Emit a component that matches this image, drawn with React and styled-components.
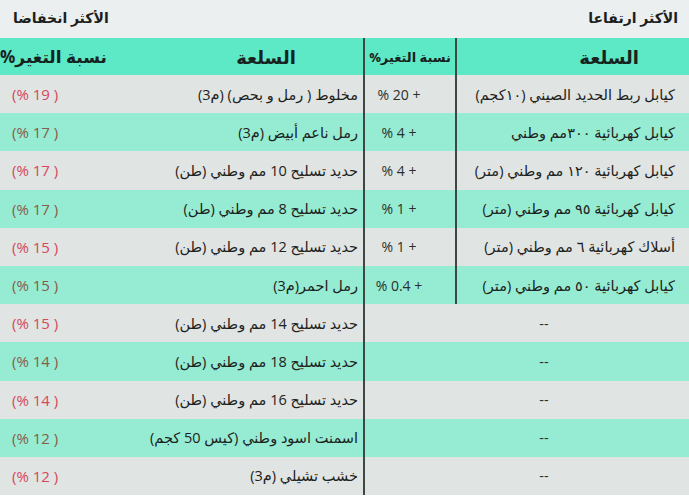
import styled, { createGlobalStyle } from "styled-components";

const GlobalStyle = createGlobalStyle`
  html, body {
    margin: 0;
    padding: 0;
    background: #ffffff;
  }
  body {
    font-family: "Open Sans", "DejaVu Sans", sans-serif;
  }
`;

const drops = [
  { name: "مخلوط ( رمل و بحص) (م3)", pct: "(% 19 )" },
  { name: "رمل ناعم أبيض (م3)", pct: "(% 17 )" },
  { name: "حديد تسليح 10 مم وطني (طن)", pct: "(% 17 )" },
  { name: "حديد تسليح 8 مم وطني (طن)", pct: "(% 17 )" },
  { name: "حديد تسليح 12 مم وطني (طن)", pct: "(% 15 )" },
  { name: "رمل احمر(م3)", pct: "(% 15 )" },
  { name: "حديد تسليح 14 مم وطني (طن)", pct: "(% 15 )" },
  { name: "حديد تسليح 18 مم وطني (طن)", pct: "(% 14 )" },
  { name: "حديد تسليح 16 مم وطني (طن)", pct: "(% 14 )" },
  { name: "اسمنت اسود وطني (كيس 50 كجم)", pct: "(% 12 )" },
  { name: "خشب تشيلي (م3)", pct: "(% 12 )" },
];

const rises = [
  { name: "كيابل ربط الحديد الصيني (١٠كجم)", pct: "% 20 +" },
  { name: "كيابل كهربائية ٣٠٠مم وطني", pct: "% 4 +" },
  { name: "كيابل كهربائية ١٢٠ مم وطني (متر)", pct: "% 4 +" },
  { name: "كيابل كهربائية ٩٥ مم وطني (متر)", pct: "% 1 +" },
  { name: "أسلاك كهربائية ٦ مم وطني (متر)", pct: "% 1 +" },
  { name: "كيابل كهربائية ٥٠ مم وطني (متر)", pct: "% 0.4 +" },
  null,
  null,
  null,
  null,
  null,
];

export default function App() {
  return (
    <Page>
      <GlobalStyle />
      <TitleBar>
        <Title>الأكثر انخفاضا</Title>
        <Title>الأكثر ارتفاعا</Title>
      </TitleBar>
      <Tables>
        <DropTable>
          <HeadPct>نسبة التغير%</HeadPct>
          <HeadName>السلعة</HeadName>
          {drops.map((row, i) => (
            <Row key={`drop-${i}`} $alt={i % 2 === 1}>
              <DropPct $alt={i % 2 === 1}>{row.pct}</DropPct>
              <Name dir="rtl">{row.name}</Name>
            </Row>
          ))}
        </DropTable>

        <RiseTable>
          <RiseHeadPct>نسبة التغير%</RiseHeadPct>
          <RiseHeadName>السلعة</RiseHeadName>
          {rises.map((row, i) =>
            row ? (
              <Row key={`rise-${i}`} $alt={i % 2 === 1}>
                <RisePct>{row.pct}</RisePct>
                <RiseName dir="rtl">{row.name}</RiseName>
              </Row>
            ) : (
              <Row key={`rise-${i}`} $alt={i % 2 === 1}>
                <Empty>--</Empty>
              </Row>
            )
          )}
        </RiseTable>
      </Tables>
    </Page>
  );
}

const Page = styled.div`
  width: 689px;
  height: 500px;
  overflow: hidden;
  background: #ffffff;
  color: #222a27;
`;

const TitleBar = styled.div`
  height: 38px;
  background: #eceff0;
  display: flex;
  justify-content: space-between;
  align-items: center;
  padding: 0 11px 4px 13px;
  box-sizing: border-box;
`;

const Title = styled.div`
  direction: rtl;
  font-size: 14px;
  font-weight: bold;
  color: #1c1f1e;
`;

const Tables = styled.div`
  display: flex;
`;

const DropTable = styled.div`
  width: 363px;
  flex-shrink: 0;
  display: grid;
  grid-template-columns: 150px 1fr;
  grid-template-rows: 37px;
  grid-auto-rows: 38.2px;
`;

const RiseTable = styled.div`
  flex: 1;
  display: grid;
  grid-template-columns: 92px 1fr;
  grid-template-rows: 37px;
  grid-auto-rows: 38.2px;
  border-left: 2px solid #3d4845;
`;

const Head = styled.div`
  background: #5de8c6;
  display: flex;
  align-items: center;
  font-weight: bold;
  color: #17231f;
  direction: rtl;
  white-space: nowrap;
`;

/* in rtl, flex-end sits on the left edge */
const HeadPct = styled(Head)`
  justify-content: flex-end;
  font-size: 17px;
`;

const HeadName = styled(Head)`
  justify-content: center;
  font-size: 18px;
  padding-left: 12px;
`;

const RiseHeadPct = styled(Head)`
  justify-content: center;
  font-size: 13px;
  border-right: 2px solid #3d4845;
`;

const RiseHeadName = styled(Head)`
  justify-content: flex-start;
  font-size: 18px;
  padding-right: 50px;
`;

const Row = styled.div`
  display: contents;
  & > * {
    background: ${(p) => (p.$alt ? "#95ecd3" : "#e0e4e3")};
  }
`;

const Cell = styled.div`
  display: flex;
  align-items: center;
  white-space: nowrap;
  font-size: 14.5px;
`;

const DropPct = styled(Cell)`
  padding-left: 12px;
  font-size: 15px;
  color: ${(p) => (p.$alt ? "#8a5a4a" : "#d6475b")};
`;

const Name = styled(Cell)`
  justify-content: flex-start;
  padding-right: 12px;
  color: #1c2220;
`;

const RisePct = styled(Cell)`
  justify-content: center;
  padding-right: 22px;
  font-size: 14px;
  color: #2a302e;
  border-right: 2px solid #3d4845;
`;

const RiseName = styled(Name)`
  padding-right: 14px;
`;

const Empty = styled(Cell)`
  grid-column: 1 / -1;
  justify-content: center;
  padding-left: 34px;
  color: #2a302e;
`;
